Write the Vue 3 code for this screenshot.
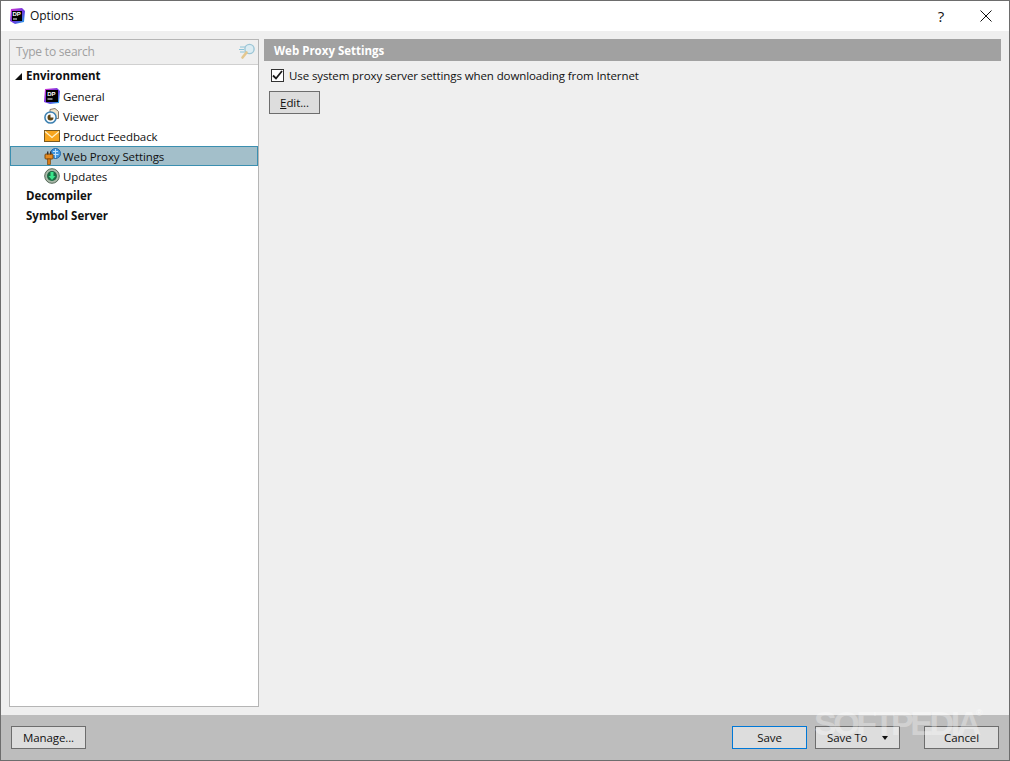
<script setup>
const children = [
  { label: 'General', icon: 'dp' },
  { label: 'Viewer', icon: 'viewer' },
  { label: 'Product Feedback', icon: 'mail' },
  { label: 'Web Proxy Settings', icon: 'proxy', selected: true },
  { label: 'Updates', icon: 'updates' }
]
</script>

<template>
  <div class="window">
    <header class="titlebar">
      <svg class="app-icon" width="16" height="16" viewBox="0 0 16 16">
        <defs>
          <linearGradient id="dpg" x1="0" y1="0" x2="1" y2="1">
            <stop offset="0" stop-color="#d62fd0" />
            <stop offset="0.55" stop-color="#6a3be0" />
            <stop offset="1" stop-color="#19b5e8" />
          </linearGradient>
        </defs>
        <path d="M2 1 L13 0 L16 3 L15 14 L6 16 L1 13 Z" fill="url(#dpg)" />
        <rect x="3" y="3" width="10" height="10" fill="#000" />
        <rect x="4" y="10.5" width="4" height="1" fill="#fff" />
        <text x="3.6" y="8.4" class="dp-letters">DP</text>
      </svg>
      <span class="title">Options</span>
      <span class="help">?</span>
      <svg class="close" width="12" height="12" viewBox="0 0 12 12">
        <path d="M.5.5l11 11M11.5.5l-11 11" stroke="#111" stroke-width="1" fill="none" />
      </svg>
    </header>

    <main class="body">
      <aside class="sidebar">
        <div class="search">
          <span class="search-text">Type to search</span>
          <svg width="17" height="17" viewBox="0 0 17 17">
            <path d="M1 4h5M0 6.5h5M1 9h5" stroke="#8cc4d8" stroke-width="1" fill="none" />
            <circle cx="10.5" cy="6" r="4.6" fill="#dcecf2" stroke="#9cc6d6" stroke-width="1.4" />
            <path d="M7.500 9.500L3.500 14.500" stroke="#e3c78f" stroke-width="2.6" stroke-linecap="round" />
          </svg>
        </div>
        <div class="tree">
          <div class="group">
            <span class="arrow"></span>
            Environment
          </div>
          <div
            v-for="child in children"
            :key="child.label"
            class="leaf"
            :class="{ selected: child.selected }"
          >
            <span class="leaf-icon">
              <svg v-if="child.icon === 'dp'" width="16" height="16" viewBox="0 0 16 16">
                <path d="M1 1 L13 0 L16 3 L15 15 L6 16 L0 14 Z" fill="url(#dpg)" />
                <rect x="2" y="2" width="12" height="12" fill="#000" />
                <rect x="3.500" y="10.500" width="5" height="1" fill="#fff" />
                <text x="3.200" y="8.400" class="dp-letters">DP</text>
              </svg>
              <svg v-else-if="child.icon === 'viewer'" width="16" height="16" viewBox="0 0 16 16">
                <path d="M6 1.500L11 .5L14.500 3.500V10.500H6Z" fill="#efe3c8" stroke="#85796a" stroke-width="1" />
                <circle cx="6.500" cy="9.500" r="5.600" fill="#f4f8fb" stroke="#3a7fb0" stroke-width="1.500" />
                <path d="M6.500 6.500V9.500H9.500A3 3 0 1 1 6.500 6.500Z" fill="#5f4410" />
              </svg>
              <svg v-else-if="child.icon === 'mail'" width="16" height="12" viewBox="0 0 16 12">
                <rect x=".5" y=".5" width="15" height="11" fill="#f7a51e" stroke="#7a5a20" stroke-width="1" />
                <path d="M1 1.500L8 7.500L15 1.500" stroke="#fff1c8" stroke-width="1.200" fill="none" />
              </svg>
              <svg v-else-if="child.icon === 'proxy'" width="17" height="17" viewBox="0 0 17 17">
                <circle cx="11.500" cy="5.500" r="5" fill="#3f96e0" stroke="#2468a8" stroke-width="1" />
                <path d="M9 3.500h5M8.500 6.500h6M11.500 1v9" stroke="#bfe2fb" stroke-width="1" fill="none" />
                <rect x="1" y="6" width="8" height="5" rx="1" fill="#e58a1f" stroke="#7b4a10" stroke-width="1" />
                <rect x="3" y="3.500" width="1.400" height="3" fill="#333" />
                <rect x="6" y="3.500" width="1.400" height="3" fill="#333" />
                <rect x="3.500" y="11" width="3" height="5.500" fill="#d87a16" stroke="#7b4a10" stroke-width=".7" />
              </svg>
              <svg v-else width="16" height="16" viewBox="0 0 16 16">
                <circle cx="8" cy="8" r="7.300" fill="#a9b8a8" stroke="#56695a" stroke-width="1" />
                <circle cx="8" cy="8" r="5" fill="#1d6a44" />
                <path d="M6.500 4h3v4h2L8 12 4.500 8h2z" fill="#3ae68c" />
              </svg>
            </span>
            <span>{{ child.label }}</span>
          </div>
          <div class="group">Decompiler</div>
          <div class="group">Symbol Server</div>
        </div>
      </aside>

      <section class="content">
        <h1 class="heading">Web Proxy Settings</h1>
        <label class="check-row">
          <span class="checkbox">
            <svg width="11" height="10" viewBox="0 0 11 10">
              <path d="M1 5.500L4 8.500L10 1" stroke="#1a1a1a" stroke-width="1.800" fill="none" />
            </svg>
          </span>
          Use system proxy server settings when downloading from Internet
        </label>
        <button class="btn edit"><u>E</u>dit...</button>
      </section>
    </main>

    <footer class="footer">
      <button class="btn manage">Manage...</button>
      <div class="spacer"></div>
      <button class="btn save">Save</button>
      <button class="btn save-to">
        <span>Save To</span>
        <span class="caret"></span>
      </button>
      <button class="btn cancel">Cancel</button>
      <span class="watermark">SOFTPEDIA</span>
      <span class="watermark-mark">®</span>
    </footer>
  </div>
</template>

<style>
html, body {
  margin: 0;
  height: 100%;
}
</style>

<style scoped>
.window {
  box-sizing: border-box;
  width: 1010px;
  height: 761px;
  border: 1px solid #6d6d6d;
  display: flex;
  flex-direction: column;
  background: #efefef;
  font-family: "Open Sans", "Noto Sans", sans-serif;
  font-size: 11.5px;
  letter-spacing: -0.1px;
  color: #111;
  overflow: hidden;
}

/* title bar */
.titlebar {
  height: 30px;
  background: #fff;
  display: flex;
  align-items: center;
  padding: 0 0 1px 8px;
  box-sizing: border-box;
  flex: none;
}
.title {
  margin-left: 5px;
  font-size: 12px;
}
.help {
  margin-left: auto;
  font-size: 15px;
  margin-right: 36px;
}
.close {
  margin-right: 17px;
}
.dp-letters {
  font-family: "Liberation Sans", sans-serif;
  font-size: 6px;
  font-weight: bold;
  fill: #fff;
}

/* body */
.body {
  flex: 1;
  display: flex;
  padding: 8px 8px 8px;
  gap: 5px;
  min-height: 0;
}
.sidebar {
  width: 248px;
  border: 1px solid #b5b5b5;
  background: #fff;
  display: flex;
  flex-direction: column;
  flex: none;
}
.search {
  height: 24px;
  background: #efefef;
  border-bottom: 1px solid #d0d0d0;
  display: flex;
  align-items: center;
  justify-content: space-between;
  padding: 0 2px 2px 6px;
  box-sizing: content-box;
  height: 22px;
  flex: none;
}
.search-text {
  color: #a0a0a0;
  font-size: 12px;
  letter-spacing: -0.2px;
}
.tree {
  padding-top: 1px;
}
.group {
  height: 20px;
  line-height: 20px;
  font-weight: 700;
  padding-left: 16px;
  position: relative;
  letter-spacing: 0;
}
.arrow {
  position: absolute;
  left: 5px;
  top: 7px;
  width: 0;
  height: 0;
  border-left: 7px solid transparent;
  border-bottom: 7px solid #111;
}
.leaf {
  box-sizing: border-box;
  height: 20px;
  display: flex;
  align-items: center;
  gap: 3px;
  padding-left: 34px;
}
.leaf-icon {
  width: 16px;
  height: 17px;
  display: flex;
  align-items: center;
  flex: none;
}
.leaf-icon svg {
  flex: none;
}
.leaf.selected {
  background: #a3bfca;
  border-top: 1px solid #3b8fb0;
  border-bottom: 1px solid #3b8fb0;
  box-shadow: inset 1px 0 #3b8fb0, inset -1px 0 #3b8fb0;
}

/* right side */
.content {
  flex: 1;
  display: flex;
  flex-direction: column;
  align-items: flex-start;
}
.heading {
  align-self: stretch;
  margin: 0;
  height: 22px;
  line-height: 23px;
  background: #a1a1a1;
  color: #fff;
  font-size: 11.5px;
  font-weight: 700;
  letter-spacing: 0;
  padding-left: 10px;
}
.check-row {
  display: flex;
  align-items: center;
  gap: 5px;
  margin: 6px 0 0 7px;
  height: 16px;
}
.checkbox {
  box-sizing: border-box;
  width: 13px;
  height: 13px;
  border: 1px solid #333;
  background: #fff;
  display: flex;
  align-items: center;
  justify-content: center;
}
.btn {
  box-sizing: border-box;
  height: 23px;
  border: 1px solid #6d6d6d;
  background: #dddddd;
  font: inherit;
  letter-spacing: inherit;
  color: inherit;
  padding: 0;
}
.edit {
  width: 51px;
  margin: 8px 0 0 5px;
}

/* footer */
.footer {
  position: relative;
  height: 45px;
  flex: none;
  background: #bdbdbd;
  display: flex;
  align-items: center;
  padding: 0 10px;
}
.spacer {
  flex: 1;
}
.manage {
  width: 75px;
}
.save {
  width: 75px;
  border-color: #0078d7;
}
.save-to {
  width: 85px;
  margin-left: 8px;
  display: flex;
  align-items: center;
  justify-content: space-between;
  padding: 0 11px;
}
.caret {
  width: 0;
  height: 0;
  border: 3.5px solid transparent;
  border-top: 4px solid #111;
  margin-top: 4px;
}
.cancel {
  width: 75px;
  margin-left: 24px;
}
.watermark {
  position: absolute;
  left: 813px;
  top: -7px;
  font-family: "Liberation Sans", sans-serif;
  font-size: 34px;
  line-height: 30px;
  font-weight: 700;
  letter-spacing: -3.4px;
  color: rgba(255, 255, 255, 0.32);
  pointer-events: none;
}
.watermark-mark {
  position: absolute;
  left: 975px;
  top: -7px;
  font-family: "Liberation Sans", sans-serif;
  font-size: 9px;
  line-height: 10px;
  letter-spacing: 0;
  color: rgba(255, 255, 255, 0.6);
}
</style>
